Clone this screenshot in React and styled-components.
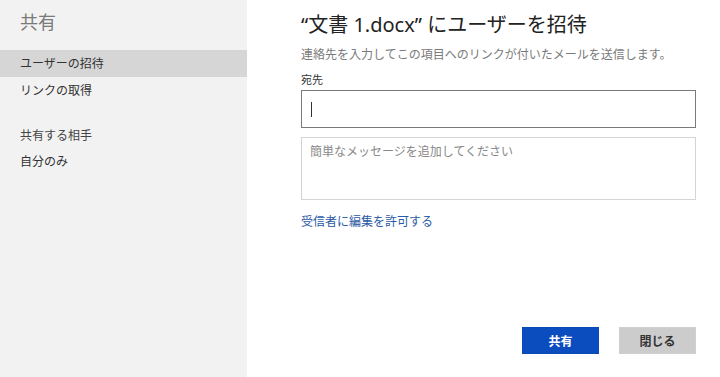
import React from 'react'
import styled, { createGlobalStyle } from 'styled-components'

const GlobalStyle = createGlobalStyle`
  html, body {
    margin: 0;
    padding: 0;
    background: #ffffff;
  }
  body {
    font-family: 'Noto Sans', 'Noto Sans CJK JP', sans-serif;
  }
`

const Page = styled.div`
  display: flex;
  width: 720px;
  height: 377px;
  overflow: hidden;
`

const Sidebar = styled.nav`
  width: 247px;
  flex-shrink: 0;
  background: #f2f2f2;
  display: flex;
  flex-direction: column;
  padding-top: 9px;
  box-sizing: border-box;
`

const SideTitle = styled.h2`
  margin: 0 0 15px 20px;
  font-size: 18px;
  font-weight: 400;
  color: #7a7a7a;
  line-height: 26px;
`

const SideItem = styled.div`
  height: ${p => (p.$active ? '27px' : '24px')};
  line-height: ${p => (p.$active ? '27px' : '24px')};
  padding-left: 20px;
  font-size: 12px;
  color: #333;
  background: ${p => (p.$active ? '#d6d6d6' : 'transparent')};
  margin-top: ${p => (p.$active ? '0' : '2px')};
  margin-bottom: ${p => (p.$gap ? '19px' : '0')};
`

const SideHeading = styled(SideItem)`
  color: #444;
`

const Main = styled.main`
  flex: 1;
  display: flex;
  flex-direction: column;
  padding: 13px 24px 23px 54px;
  box-sizing: border-box;
`

const Title = styled.h1`
  margin: 0;
  font-size: 20px;
  font-weight: 400;
  color: #222;
  line-height: 24px;
`

const Lead = styled.p`
  margin: 9px 0 0;
  font-size: 12px;
  color: #7a7a7a;
  line-height: 18px;
`

const Label = styled.label`
  margin-top: 8px;
  font-size: 11px;
  color: #333;
  line-height: 16px;
`

const ToInput = styled.div`
  margin-top: 2px;
  height: 38px;
  border: 1px solid #7a7a7a;
  box-sizing: border-box;
  display: flex;
  align-items: center;
  padding-left: 9px;
`

const Caret = styled.span`
  width: 1px;
  height: 15px;
  background: #333;
`

const Message = styled.div`
  margin-top: 9px;
  height: 63px;
  border: 1px solid #d4d4d4;
  box-sizing: border-box;
  padding: 5px 8px;
  font-size: 12px;
  color: #888;
  line-height: 18px;
`

const EditLink = styled.a`
  margin-top: 13px;
  align-self: flex-start;
  font-size: 12px;
  color: #2b5aa6;
  line-height: 18px;
  text-decoration: none;
  cursor: pointer;
`

const Footer = styled.div`
  margin-top: auto;
  display: flex;
  justify-content: flex-end;
  gap: 20px;
`

const Button = styled.button`
  width: 77px;
  height: 27px;
  border: 1px solid ${p => (p.$primary ? '#0b48b8' : '#cfcfcf')};
  background: ${p => (p.$primary ? '#0b4cbf' : '#cccccc')};
  color: ${p => (p.$primary ? '#ffffff' : '#333333')};
  font-family: inherit;
  font-size: 12px;
  font-weight: 700;
  padding: 0;
  cursor: pointer;
`

export default function App() {
  return (
    <Page>
      <GlobalStyle />
      <Sidebar>
        <SideTitle>共有</SideTitle>
        <SideItem $active>ユーザーの招待</SideItem>
        <SideItem $gap>リンクの取得</SideItem>
        <SideHeading>共有する相手</SideHeading>
        <SideItem>自分のみ</SideItem>
      </Sidebar>
      <Main>
        <Title>“文書 1.docx” にユーザーを招待</Title>
        <Lead>連絡先を入力してこの項目へのリンクが付いたメールを送信します。</Lead>
        <Label>宛先</Label>
        <ToInput>
          <Caret />
        </ToInput>
        <Message>簡単なメッセージを追加してください</Message>
        <EditLink>受信者に編集を許可する</EditLink>
        <Footer>
          <Button $primary>共有</Button>
          <Button>閉じる</Button>
        </Footer>
      </Main>
    </Page>
  )
}
